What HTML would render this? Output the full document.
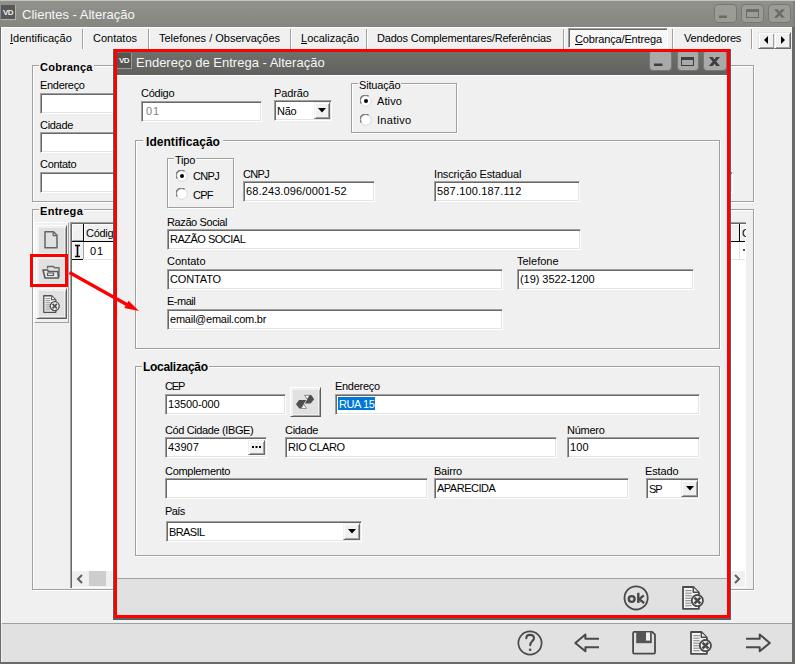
<!DOCTYPE html><html><head><meta charset="utf-8"><style>
*{margin:0;padding:0;box-sizing:border-box}
html,body{width:795px;height:664px;overflow:hidden;background:#f0f0f0;position:relative;font-family:"Liberation Sans",sans-serif}
.t{position:absolute;white-space:nowrap;line-height:1;font-family:"Liberation Sans",sans-serif}
.in{position:absolute;background:#fff;border-top:1px solid #a0a0a0;border-left:1px solid #a0a0a0;border-right:1px solid #fff;border-bottom:1px solid #fff;box-shadow:inset 1px 1px 0 #696969,inset -1px -1px 0 #e3e3e3}
.gb{position:absolute;border:1px solid #a0a0a0;box-shadow:inset 1px 1px 0 #fff,1px 1px 0 #fff}
.btn3d{position:absolute;background:#f0f0f0;border-top:1px solid #e3e3e3;border-left:1px solid #e3e3e3;border-right:1px solid #696969;border-bottom:1px solid #696969;box-shadow:inset 1px 1px 0 #fff,inset -1px -1px 0 #a0a0a0}
.dd{position:absolute;background:#f0f0f0;border-top:1px solid #f0f0f0;border-left:1px solid #f0f0f0;border-right:1px solid #696969;border-bottom:1px solid #696969;box-shadow:inset 1px 1px 0 #fff,inset -1px -1px 0 #a0a0a0}
.tb{position:absolute;background:#e1e1e1;border-top:1px solid #fff;border-left:1px solid #fff;border-right:1px solid #5e5e5e;border-bottom:1px solid #5e5e5e;box-shadow:inset 2px 2px 0 #f0f0f0,inset -1px -1px 0 #a8a8a8,inset -2px -2px 0 #f0f0f0}
</style></head><body>
<div style="position:absolute;left:0px;top:0px;width:795px;height:27px;background:linear-gradient(#92928d,#868681)"></div>
<div style="position:absolute;left:0px;top:0px;width:795px;height:1px;background:#c4c4c0"></div>
<div style="position:absolute;left:1px;top:5px;width:15px;height:15px;background:#585856;border-right:1px solid #b0b0ac;border-bottom:1px solid #b0b0ac"></div>
<div class="t" style="left:3px;top:9px;font-size:8px;font-weight:bold;color:#eee;letter-spacing:-0.5px">VD</div>
<div class="t" style="left:22px;top:8px;font-size:13px;color:#f6f6f6;">Clientes - Alteração</div>
<div style="position:absolute;left:714px;top:4px;width:23px;height:19px;background:#9c9c97;border:1px solid #777773;border-radius:4px"></div>
<div style="position:absolute;left:741px;top:4px;width:23px;height:19px;background:#9c9c97;border:1px solid #777773;border-radius:4px"></div>
<div style="position:absolute;left:768px;top:4px;width:23px;height:19px;background:#9c9c97;border:1px solid #777773;border-radius:4px"></div>
<svg style="position:absolute;left:0;top:0" width="795" height="27"><rect x="719" y="15.5" width="8" height="2.5" fill="#6b6b67"/><rect x="746.5" y="9.5" width="12" height="8" fill="none" stroke="#6b6b67"/><rect x="746" y="9" width="13" height="3" fill="#6b6b67"/><path d="M774 9.2H777.4L785 17.8H781.6Z M781.6 9.2H785L777.4 17.8H774Z" fill="#6b6b67"/></svg>
<div style="position:absolute;left:0px;top:27px;width:1px;height:637px;background:#6a6a66"></div>
<div style="position:absolute;left:1px;top:27px;width:1px;height:596px;background:#fff"></div>
<div style="position:absolute;left:792px;top:27px;width:3px;height:637px;background:#6a6a66"></div>
<div style="position:absolute;left:793px;top:1px;width:2px;height:26px;background:#7e7e7a"></div>
<div style="position:absolute;left:0px;top:662px;width:795px;height:2px;background:#6a6a66"></div>
<div style="position:absolute;left:1px;top:27px;width:791px;height:1px;background:#fff"></div>
<div style="position:absolute;left:568px;top:28px;width:100px;height:20px;background:repeating-conic-gradient(#fff 0 25%,#f0f0f0 0 50%) 0 0/2px 2px;border-top:1px solid #a0a0a0;border-left:1px solid #a0a0a0;border-right:1px solid #fff;border-bottom:1px solid #fff;box-shadow:inset 1px 1px 0 #696969"></div>
<div class="t" style="left:10px;top:33px;font-size:11px;color:#000;"><u>I</u>dentificação</div>
<div class="t" style="left:93px;top:33px;font-size:11px;color:#000;">Contatos</div>
<div class="t" style="left:159px;top:33px;font-size:11px;color:#000;">Telefones / Observações</div>
<div class="t" style="left:301px;top:33px;font-size:11px;color:#000;"><u>L</u>ocalização</div>
<div class="t" style="left:377px;top:33px;font-size:11px;color:#000;"><span style="letter-spacing:-0.19px">Dados Complementares/Referências</span></div>
<div class="t" style="left:575px;top:34px;font-size:11px;color:#000;"><span style="letter-spacing:-0.15px"><u>C</u>obrança/Entrega</span></div>
<div class="t" style="left:684px;top:33px;font-size:11px;color:#000;"><span style="letter-spacing:-0.15px">Vendedores</span></div>
<div style="position:absolute;left:82px;top:29px;width:1px;height:20px;background:#a0a0a0"></div>
<div style="position:absolute;left:83px;top:29px;width:1px;height:20px;background:#fff"></div>
<div style="position:absolute;left:148px;top:29px;width:1px;height:20px;background:#a0a0a0"></div>
<div style="position:absolute;left:149px;top:29px;width:1px;height:20px;background:#fff"></div>
<div style="position:absolute;left:290px;top:29px;width:1px;height:20px;background:#a0a0a0"></div>
<div style="position:absolute;left:291px;top:29px;width:1px;height:20px;background:#fff"></div>
<div style="position:absolute;left:366px;top:29px;width:1px;height:20px;background:#a0a0a0"></div>
<div style="position:absolute;left:367px;top:29px;width:1px;height:20px;background:#fff"></div>
<div style="position:absolute;left:563px;top:29px;width:1px;height:20px;background:#a0a0a0"></div>
<div style="position:absolute;left:564px;top:29px;width:1px;height:20px;background:#fff"></div>
<div style="position:absolute;left:672px;top:29px;width:1px;height:20px;background:#a0a0a0"></div>
<div style="position:absolute;left:673px;top:29px;width:1px;height:20px;background:#fff"></div>
<div style="position:absolute;left:751px;top:29px;width:1px;height:20px;background:#a0a0a0"></div>
<div style="position:absolute;left:752px;top:29px;width:1px;height:20px;background:#fff"></div>
<div class="btn3d" style="left:758px;top:32px;width:17px;height:17px"></div>
<div class="btn3d" style="left:774px;top:32px;width:17px;height:17px"></div>
<svg style="position:absolute;left:763px;top:36px" width="6" height="9"><path d="M5 0V8L1 4Z" fill="#000"/></svg>
<svg style="position:absolute;left:780px;top:36px" width="6" height="9"><path d="M1 0V8L5 4Z" fill="#000"/></svg>
<div class="gb" style="left:32px;top:65px;width:722px;height:137px"></div>
<div class="t" style="left:39px;top:62px;font-size:11px;font-weight:bold;letter-spacing:0.25px;background:#f0f0f0;padding:0 1px">Cobrança</div>
<div class="t" style="left:40px;top:80px;font-size:11px;letter-spacing:-0.3px;color:#000;">Endereço</div>
<div class="in" style="left:40px;top:93px;width:690px;height:21px"></div>
<div class="t" style="left:40px;top:120px;font-size:11px;letter-spacing:-0.3px;color:#000;">Cidade</div>
<div class="in" style="left:40px;top:132px;width:690px;height:21px"></div>
<div class="t" style="left:40px;top:159px;font-size:11px;letter-spacing:-0.3px;color:#000;">Contato</div>
<div class="in" style="left:40px;top:172px;width:693px;height:21px"></div>
<div class="gb" style="left:32px;top:209px;width:722px;height:381px"></div>
<div class="t" style="left:39px;top:206px;font-size:11px;font-weight:bold;letter-spacing:0.3px;background:#f0f0f0;padding:0 1px">Entrega</div>
<div style="position:absolute;left:34px;top:222px;width:35px;height:101px;border-left:1px solid #fff;border-top:1px solid #fff;border-right:1px solid #a0a0a0;border-bottom:1px solid #a0a0a0"></div>
<div class="tb" style="left:36px;top:225px;width:31px;height:31px"></div>
<div class="tb" style="left:36px;top:256px;width:31px;height:31px"></div>
<div class="tb" style="left:36px;top:288px;width:31px;height:31px"></div>
<div style="position:absolute;left:70px;top:222px;width:676px;height:366px;background:#fff;border-left:1px solid #a0a0a0;border-top:1px solid #a0a0a0;box-shadow:inset 1px 1px 0 #696969"></div>
<div style="position:absolute;left:72px;top:224px;width:673px;height:17px;background:#f0f0f0;border-top:1px solid #fff"></div>
<div style="position:absolute;left:72px;top:224px;width:11px;height:17px;border-left:1px solid #fff;border-top:1px solid #fff;border-bottom:1px solid #a0a0a0"></div>
<div style="position:absolute;left:84px;top:224px;width:1px;height:17px;background:#fff"></div>
<div style="position:absolute;left:72px;top:241px;width:673px;height:1px;background:#000"></div>
<div style="position:absolute;left:83px;top:224px;width:1px;height:18px;background:#000"></div>
<div style="position:absolute;left:739px;top:224px;width:1px;height:18px;background:#000"></div>
<div style="position:absolute;left:740px;top:224px;width:1px;height:17px;background:#fff"></div>
<div style="position:absolute;left:72px;top:242px;width:11px;height:17px;background:#f0f0f0;border-left:1px solid #fff;border-top:1px solid #fff"></div>
<div style="position:absolute;left:72px;top:259px;width:11px;height:1px;background:#000"></div>
<div style="position:absolute;left:83px;top:242px;width:1px;height:17px;background:#a0a0a0"></div>
<div style="position:absolute;left:84px;top:259px;width:661px;height:1px;background:#e3e3e3"></div>
<div style="position:absolute;left:739px;top:242px;width:1px;height:17px;background:#e3e3e3"></div>
<svg style="position:absolute;left:74px;top:244px" width="8" height="14"><path d="M1 1.5H6M3.5 1.5V12.5M1 12.5H6" stroke="#000" stroke-width="1.6" fill="none"/></svg>
<div class="t" style="left:86px;top:228px;font-size:11px;letter-spacing:-0.3px;color:#000;">Código</div>
<div style="position:absolute;left:740px;top:224px;width:6px;height:17px;overflow:hidden"><div class="t" style="left:2px;top:4px;font-size:11px">C</div></div>
<div class="t" style="left:90px;top:246px;font-size:11px;letter-spacing:1px;color:#000;">01</div>
<div style="position:absolute;left:743px;top:249px;width:2px;height:2px;background:#555"></div>
<div style="position:absolute;left:72px;top:571px;width:673px;height:16px;background:#f0f0f0"></div>
<div style="position:absolute;left:89px;top:571px;width:17px;height:15px;background:#cdcdcd"></div>
<svg style="position:absolute;left:76px;top:574px" width="9" height="10"><path d="M6 1L2 5L6 9" fill="none" stroke="#606060" stroke-width="2"/></svg>
<svg style="position:absolute;left:733px;top:574px" width="9" height="10"><path d="M2 1L6 5L2 9" fill="none" stroke="#606060" stroke-width="2"/></svg>
<svg style="position:absolute;left:0;top:0" width="80" height="330" fill="none" stroke="#5a5a5a" stroke-linejoin="round"><path d="M45 231.8H53.5L57 235.3V247.8H45Z" stroke-width="1.5" stroke="#646464"/><path d="M53.2 232.2V235.6H56.6" stroke-width="1.3" stroke="#646464"/><path d="M47.5 268.5V266.5H53.5L54.5 267.8H59V277" stroke-width="1.4" stroke="#6a6a6a"/><path d="M43 270H47.5L48.5 271.5H57.8L58.5 278H45Z" stroke-width="1.6" fill="#e8e8e8"/><rect x="47.5" y="273" width="6" height="2.5" stroke-width="1.2"/></svg>
<svg style="position:absolute;left:43px;top:295px;overflow:visible" width="18.2" height="19.0"><g transform="scale(0.76)" fill="none" stroke="#505050" stroke-linejoin="round"><path d="M1 1H11.3L16.9 6.6V22.8H1Z" stroke-width="1.7" fill="#f4f4f4"/><path d="M11.3 1.5V6.3H16.4" stroke-width="1.36" fill="#f4f4f4"/><path d="M3.3 4.6H9.7" stroke="#8a8a8a" stroke-width="1.1"/><path d="M3.3 7.2H9.7" stroke="#8a8a8a" stroke-width="1.1"/><path d="M3.3 9.7H9.7" stroke="#8a8a8a" stroke-width="1.1"/><path d="M3.3 12.2H9.7" stroke="#8a8a8a" stroke-width="1.1"/><path d="M3.3 14.7H9.7" stroke="#8a8a8a" stroke-width="1.1"/><path d="M3.3 17.2H9.7" stroke="#8a8a8a" stroke-width="1.1"/><path d="M3.3 19.7H9.7" stroke="#8a8a8a" stroke-width="1.1"/><circle cx="15.4" cy="14.6" r="5.9" stroke-width="1.7" fill="#f4f4f4"/><path d="M12.5 11.7L18.3 17.5M18.3 11.7L12.5 17.5" stroke-width="2.2"/></g></svg>
<div style="position:absolute;left:2px;top:623px;width:790px;height:1px;background:#a0a0a0"></div>
<div style="position:absolute;left:2px;top:624px;width:790px;height:38px;background:#e1e1e1"></div>
<svg style="position:absolute;left:0;top:600px" width="795" height="64" fill="none" stroke="#4a4a4a" stroke-linejoin="round"><circle cx="530" cy="43" r="11.6" stroke-width="1.7"/><path d="M526.3 38.3C526.3 36 528 34.9 530 34.9C532.3 34.9 534 36.2 534 38.3C534 40.8 530.2 41.6 530.2 45.2" stroke-width="2.1" stroke-linecap="round"/><circle cx="530.1" cy="49.7" r="1.3" fill="#4a4a4a" stroke="none"/><path d="M599 38.8H585.4V34.4L575.3 42.9L585.4 51.3V47.2H599" stroke-width="2"/><path d="M746 38.8H759.7V34.4L769.8 42.9L759.7 51.3V47.2H746" stroke-width="2"/><path d="M633.1 33C633.1 32.4 633.5 31.9 634.1 31.9H652.2L655 34.7V52.6C655 53.2 654.6 53.7 654 53.7H634.1C633.5 53.7 633.1 53.2 633.1 52.6Z" stroke-width="1.8"/><rect x="636.2" y="31.5" width="15.6" height="11.7" fill="#555" stroke="none"/><rect x="646" y="32.4" width="4" height="8.2" fill="#f0f0f0" stroke="none"/></svg>
<svg style="position:absolute;left:690px;top:631px;overflow:visible" width="24.0" height="25.0"><g transform="scale(1.0)" fill="none" stroke="#4a4a4a" stroke-linejoin="round"><path d="M1 1H11.3L16.9 6.6V22.8H1Z" stroke-width="1.8" fill="#f4f4f4"/><path d="M11.3 1.5V6.3H16.4" stroke-width="1.44" fill="#f4f4f4"/><path d="M3.3 4.6H9.7" stroke="#8a8a8a" stroke-width="1.1"/><path d="M3.3 7.2H9.7" stroke="#8a8a8a" stroke-width="1.1"/><path d="M3.3 9.7H9.7" stroke="#8a8a8a" stroke-width="1.1"/><path d="M3.3 12.2H9.7" stroke="#8a8a8a" stroke-width="1.1"/><path d="M3.3 14.7H9.7" stroke="#8a8a8a" stroke-width="1.1"/><path d="M3.3 17.2H9.7" stroke="#8a8a8a" stroke-width="1.1"/><path d="M3.3 19.7H9.7" stroke="#8a8a8a" stroke-width="1.1"/><circle cx="15.4" cy="14.6" r="5.6" stroke-width="1.8" fill="#f4f4f4"/><path d="M12.5 11.7L18.3 17.5M18.3 11.7L12.5 17.5" stroke-width="2.6"/></g></svg>
<div style="position:absolute;left:113px;top:49px;width:618px;height:571px;background:#f0f0f0;border-left:1px solid #5a605f;border-right:1px solid #5a605f;border-bottom:2px solid #5a605f"></div>
<div style="position:absolute;left:114px;top:49px;width:616px;height:26px;background:linear-gradient(#71716d,#60605c)"></div>
<div style="position:absolute;left:114px;top:75px;width:613px;height:1px;background:#fff"></div>
<div style="position:absolute;left:117px;top:53px;width:15px;height:16px;background:#545452;border-right:1px solid #9a9a96;border-bottom:1px solid #9a9a96"></div>
<div class="t" style="left:119px;top:57px;font-size:8px;font-weight:bold;color:#f0f0f0;letter-spacing:-0.5px">VD</div>
<div class="t" style="left:136px;top:56px;font-size:13px;color:#f6f6f6;">Endereço de Entrega - Alteração</div>
<div style="position:absolute;left:649px;top:50px;width:23px;height:21px;background:#a9a9a9;border:1px solid #787874;border-radius:4px"></div>
<div style="position:absolute;left:677px;top:50px;width:22px;height:21px;background:#a9a9a9;border:1px solid #787874;border-radius:4px"></div>
<div style="position:absolute;left:703px;top:50px;width:24px;height:21px;background:#a9a9a9;border:1px solid #787874;border-radius:4px"></div>
<svg style="position:absolute;left:0;top:0" width="795" height="80"><rect x="654" y="63.5" width="8.5" height="2.5" fill="#3f3f3f"/><rect x="681.5" y="57.5" width="12" height="8" fill="none" stroke="#3f3f3f"/><rect x="681" y="57" width="13" height="3" fill="#3f3f3f"/><path d="M708.9 57H712.6L720 65.9H716.3Z M716.3 57H720L712.6 65.9H708.9Z" fill="#3f3f3f"/></svg>
<div class="t" style="left:141px;top:88px;font-size:11px;letter-spacing:-0.25px;color:#000;">Código</div>
<div class="in" style="left:141px;top:101px;width:121px;height:21px"></div>
<div class="t" style="left:146px;top:106px;font-size:11px;letter-spacing:0.8px;color:#808080;">01</div>
<div class="t" style="left:274px;top:88px;font-size:11px;letter-spacing:-0.12px;color:#000;">Padrão</div>
<div class="in" style="left:274px;top:100px;width:58px;height:21px"></div>
<div class="t" style="left:277px;top:106px;font-size:11px;letter-spacing:-0.3px;color:#000;">Não</div>
<div class="dd" style="left:314px;top:102px;width:16px;height:17px"></div>
<svg style="position:absolute;left:318.0px;top:108.0px" width="8" height="5"><path d="M0 0H8L4 4.5Z" fill="#000"/></svg>
<div class="gb" style="left:351px;top:83px;width:106px;height:50px"></div>
<div class="t" style="left:358px;top:80px;font-size:11px;letter-spacing:-0.18px;background:#f0f0f0;padding:0 1px">Situação</div>
<svg style="position:absolute;left:360px;top:95px" width="12" height="12"><circle cx="6" cy="6" r="5.3" fill="#fff" stroke="#d8d8d8"/><path d="M1.3 8.6A5.2 5.2 0 0 1 8.6 1.3" fill="none" stroke="#7a7a7a" stroke-width="1.3"/><circle cx="6" cy="6" r="2" fill="#000"/></svg>
<div class="t" style="left:377px;top:96px;font-size:11px;letter-spacing:0.1px;color:#000;">Ativo</div>
<svg style="position:absolute;left:360px;top:114px" width="12" height="12"><circle cx="6" cy="6" r="5.3" fill="#fff" stroke="#d8d8d8"/><path d="M1.3 8.6A5.2 5.2 0 0 1 8.6 1.3" fill="none" stroke="#7a7a7a" stroke-width="1.3"/></svg>
<div class="t" style="left:377px;top:115px;font-size:11px;letter-spacing:0.3px;color:#000;">Inativo</div>
<div class="gb" style="left:135px;top:140px;width:585px;height:209px"></div>
<div class="t" style="left:143px;top:136px;font-size:12px;font-weight:bold;letter-spacing:0.05px;background:#f0f0f0;padding:0 3px">Identificação</div>
<div class="gb" style="left:167px;top:158px;width:67px;height:50px"></div>
<div class="t" style="left:174px;top:155px;font-size:11px;letter-spacing:-0.2px;background:#f0f0f0;padding:0 1px">Tipo</div>
<svg style="position:absolute;left:176px;top:170px" width="12" height="12"><circle cx="6" cy="6" r="5.3" fill="#fff" stroke="#d8d8d8"/><path d="M1.3 8.6A5.2 5.2 0 0 1 8.6 1.3" fill="none" stroke="#7a7a7a" stroke-width="1.3"/><circle cx="6" cy="6" r="2" fill="#000"/></svg>
<div class="t" style="left:193px;top:171px;font-size:11px;letter-spacing:-0.68px;color:#000;">CNPJ</div>
<svg style="position:absolute;left:176px;top:188px" width="12" height="12"><circle cx="6" cy="6" r="5.3" fill="#fff" stroke="#d8d8d8"/><path d="M1.3 8.6A5.2 5.2 0 0 1 8.6 1.3" fill="none" stroke="#7a7a7a" stroke-width="1.3"/></svg>
<div class="t" style="left:193px;top:190px;font-size:11px;letter-spacing:-0.8px;color:#000;">CPF</div>
<div class="t" style="left:243px;top:169px;font-size:11px;letter-spacing:-0.68px;color:#000;">CNPJ</div>
<div class="in" style="left:243px;top:181px;width:132px;height:21px"></div>
<div class="t" style="left:246px;top:186px;font-size:11px;letter-spacing:0.12px;color:#000;">68.243.096/0001-52</div>
<div class="t" style="left:434px;top:169px;font-size:11px;letter-spacing:-0.15px;color:#000;">Inscrição Estadual</div>
<div class="in" style="left:434px;top:181px;width:146px;height:21px"></div>
<div class="t" style="left:437px;top:186px;font-size:11px;letter-spacing:0.18px;color:#000;">587.100.187.112</div>
<div class="t" style="left:167px;top:217px;font-size:11px;letter-spacing:-0.39px;color:#000;">Razão Social</div>
<div class="in" style="left:167px;top:229px;width:414px;height:21px"></div>
<div class="t" style="left:170px;top:234px;font-size:11px;letter-spacing:-0.5px;color:#000;">RAZÃO SOCIAL</div>
<div class="t" style="left:167px;top:256px;font-size:11px;color:#000;">Contato</div>
<div class="in" style="left:167px;top:269px;width:336px;height:21px"></div>
<div class="t" style="left:170px;top:274px;font-size:11px;letter-spacing:-0.14px;color:#000;">CONTATO</div>
<div class="t" style="left:517px;top:256px;font-size:11px;color:#000;">Telefone</div>
<div class="in" style="left:517px;top:269px;width:177px;height:21px"></div>
<div class="t" style="left:520px;top:274px;font-size:11px;letter-spacing:-0.05px;color:#000;">(19) 3522-1200</div>
<div class="t" style="left:167px;top:296px;font-size:11px;letter-spacing:-0.5px;color:#000;">E-mail</div>
<div class="in" style="left:167px;top:309px;width:336px;height:21px"></div>
<div class="t" style="left:170px;top:314px;font-size:11px;letter-spacing:-0.24px;color:#000;">email@email.com.br</div>
<div class="gb" style="left:135px;top:366px;width:585px;height:190px"></div>
<div class="t" style="left:142px;top:361px;font-size:12px;font-weight:bold;letter-spacing:-0.3px;background:#f0f0f0;padding:0 1px">Localização</div>
<div class="t" style="left:165px;top:381px;font-size:11px;letter-spacing:-1.2px;color:#000;">CEP</div>
<div class="in" style="left:165px;top:394px;width:121px;height:21px"></div>
<div class="t" style="left:168px;top:399px;font-size:11px;letter-spacing:-0.13px;color:#000;">13500-000</div>
<div class="tb" style="left:290px;top:387px;width:31px;height:30px"></div>
<svg style="position:absolute;left:0;top:0" width="330" height="420"><path d="M304.6 395.3H309.8L307.2 399.2Z" fill="#fff" stroke="#6a6a6a" stroke-width="0.8" stroke-linejoin="round"/><path d="M301 408.4H306.6L303.8 404.4Z" fill="#fff" stroke="#6a6a6a" stroke-width="0.8" stroke-linejoin="round"/><path d="M309.9 395.1H311.2L314.2 399.3L310.6 403.6H304.9Z" fill="#4e4e4e"/><path d="M299 400.1H306.3L300.6 408.6H299.3L296 404.3Z" fill="#4e4e4e"/></svg>
<div class="t" style="left:335px;top:381px;font-size:11px;letter-spacing:-0.29px;color:#000;">Endereço</div>
<div class="in" style="left:335px;top:394px;width:365px;height:21px"></div>
<div style="position:absolute;left:338px;top:397px;width:37px;height:13px;background:#0078d7"></div>
<div class="t" style="left:339px;top:399px;font-size:11px;letter-spacing:-0.4px;color:#fff;">RUA 15</div>
<div class="t" style="left:165px;top:425px;font-size:11px;letter-spacing:-0.38px;color:#000;">Cód Cidade (IBGE)</div>
<div class="in" style="left:165px;top:437px;width:102px;height:21px"></div>
<div class="t" style="left:168px;top:442px;font-size:11px;letter-spacing:0.08px;color:#000;">43907</div>
<div class="dd" style="left:248px;top:440px;width:17px;height:15px"></div>
<svg style="position:absolute;left:252px;top:446px" width="10" height="3"><rect x="0" y="0" width="2" height="2" fill="#000"/><rect x="3.5" y="0" width="2" height="2" fill="#000"/><rect x="7" y="0" width="2" height="2" fill="#000"/></svg>
<div class="t" style="left:285px;top:425px;font-size:11px;letter-spacing:-0.3px;color:#000;">Cidade</div>
<div class="in" style="left:285px;top:437px;width:272px;height:21px"></div>
<div class="t" style="left:288px;top:442px;font-size:11px;letter-spacing:-0.43px;color:#000;">RIO CLARO</div>
<div class="t" style="left:567px;top:425px;font-size:11px;letter-spacing:-0.25px;color:#000;">Número</div>
<div class="in" style="left:567px;top:437px;width:133px;height:21px"></div>
<div class="t" style="left:570px;top:442px;font-size:11px;letter-spacing:0.07px;color:#000;">100</div>
<div class="t" style="left:165px;top:466px;font-size:11px;letter-spacing:-0.3px;color:#000;">Complemento</div>
<div class="in" style="left:165px;top:478px;width:263px;height:21px"></div>
<div class="t" style="left:434px;top:466px;font-size:11px;letter-spacing:-0.22px;color:#000;">Bairro</div>
<div class="in" style="left:434px;top:478px;width:195px;height:21px"></div>
<div class="t" style="left:437px;top:483px;font-size:11px;letter-spacing:-0.5px;color:#000;">APARECIDA</div>
<div class="t" style="left:645px;top:466px;font-size:11px;letter-spacing:-0.12px;color:#000;">Estado</div>
<div class="in" style="left:646px;top:478px;width:53px;height:21px"></div>
<div class="t" style="left:649px;top:484px;font-size:11px;letter-spacing:-1.0px;color:#000;">SP</div>
<div class="dd" style="left:681px;top:480px;width:17px;height:17px"></div>
<svg style="position:absolute;left:685.5px;top:486.0px" width="8" height="5"><path d="M0 0H8L4 4.5Z" fill="#000"/></svg>
<div class="t" style="left:165px;top:506px;font-size:11px;letter-spacing:-0.6px;color:#000;">País</div>
<div class="in" style="left:166px;top:521px;width:196px;height:21px"></div>
<div class="t" style="left:169px;top:527px;font-size:11px;letter-spacing:-0.6px;color:#000;">BRASIL</div>
<div class="dd" style="left:343px;top:523px;width:17px;height:17px"></div>
<svg style="position:absolute;left:347.5px;top:529.0px" width="8" height="5"><path d="M0 0H8L4 4.5Z" fill="#000"/></svg>
<div style="position:absolute;left:114px;top:578px;width:616px;height:1px;background:#a0a0a0"></div>
<div style="position:absolute;left:114px;top:579px;width:616px;height:36px;background:#e1e1e1"></div>
<svg style="position:absolute;left:600px;top:570px" width="60" height="50"><circle cx="36.1" cy="27.9" r="11.6" fill="none" stroke="#4a4a4a" stroke-width="1.8"/></svg>
<svg style="position:absolute;left:600px;top:570px" width="60" height="50" fill="none" stroke="#4a4a4a"><circle cx="31.7" cy="29" r="2.9" stroke-width="2.4"/><path d="M38.3 22.8V33" stroke-width="2.4"/><path d="M43.8 25.3L39.2 29.2L44.2 33" stroke-width="2.4"/></svg>
<svg style="position:absolute;left:682px;top:586px;overflow:visible" width="24.0" height="25.0"><g transform="scale(1.0)" fill="none" stroke="#4a4a4a" stroke-linejoin="round"><path d="M1 1H11.3L16.9 6.6V22.8H1Z" stroke-width="1.8" fill="#f4f4f4"/><path d="M11.3 1.5V6.3H16.4" stroke-width="1.44" fill="#f4f4f4"/><path d="M3.3 4.6H9.7" stroke="#8a8a8a" stroke-width="1.1"/><path d="M3.3 7.2H9.7" stroke="#8a8a8a" stroke-width="1.1"/><path d="M3.3 9.7H9.7" stroke="#8a8a8a" stroke-width="1.1"/><path d="M3.3 12.2H9.7" stroke="#8a8a8a" stroke-width="1.1"/><path d="M3.3 14.7H9.7" stroke="#8a8a8a" stroke-width="1.1"/><path d="M3.3 17.2H9.7" stroke="#8a8a8a" stroke-width="1.1"/><path d="M3.3 19.7H9.7" stroke="#8a8a8a" stroke-width="1.1"/><circle cx="15.4" cy="14.6" r="5.6" stroke-width="1.8" fill="#f4f4f4"/><path d="M12.5 11.7L18.3 17.5M18.3 11.7L12.5 17.5" stroke-width="2.6"/></g></svg>
<div style="position:absolute;left:114px;top:49px;width:616px;height:569px;border:3px solid #ff0000"></div>
<div style="position:absolute;left:30px;top:254px;width:38px;height:33px;border:3px solid #ff0000"></div>
<svg style="position:absolute;left:0;top:0" width="795" height="664"><path d="M69.5 272.5L128.5 305.5" stroke="#ff0000" stroke-width="3.2"/><path d="M139 311L128.6 300.8L124.3 307.9Z" fill="#ff0000"/></svg>
</body></html>
